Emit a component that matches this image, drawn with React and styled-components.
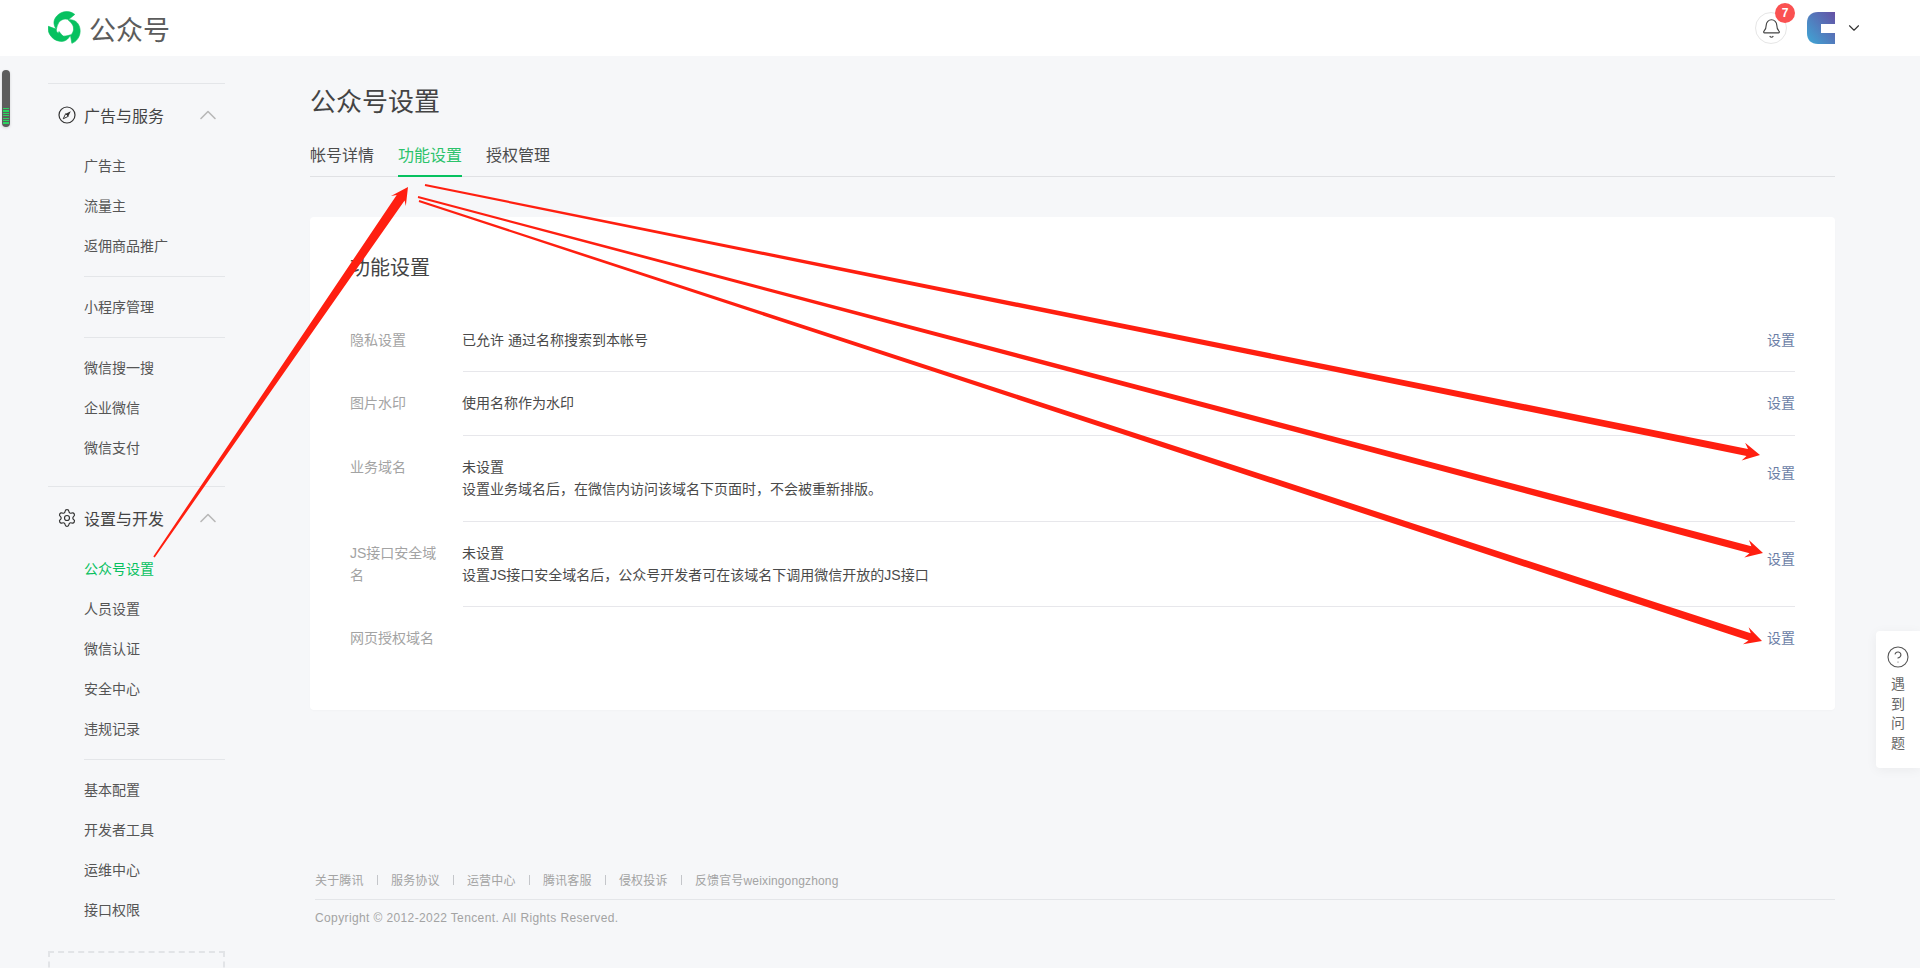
import React from "react";
import styled, { createGlobalStyle } from "styled-components";
import { Bell, ChevronDown, ChevronUp, CircleHelp, Settings } from "lucide-react";

const GlobalStyle = createGlobalStyle`
  html, body {
    margin: 0;
    padding: 0;
    background: #f6f7f9;
    font-family: "Liberation Sans", "Noto Sans CJK SC", sans-serif;
    color: #444;
  }
  * { box-sizing: border-box; }
`;

const Page = styled.div`
  position: relative;
  height: 968px;
  overflow: hidden;
  display: flex;
  flex-direction: column;
`;

const Header = styled.header`
  height: 56px;
  flex: none;
  background: #fff;
  display: flex;
  align-items: center;
  padding: 0 57px 0 48px;
`;

const Brand = styled.div`
  display: flex;
  align-items: center;
  gap: 7px;
  font-size: 27px;
  color: #5c5c5c;
`;

const HeaderRight = styled.div`
  margin-left: auto;
  display: flex;
  align-items: center;
`;

const BellButton = styled.div`
  position: relative;
  width: 32px;
  height: 32px;
  border: 1px solid #e6e6e6;
  border-radius: 50%;
  display: flex;
  align-items: center;
  justify-content: center;
  color: #444;
  margin-right: 20px;
`;

const Badge = styled.span`
  position: absolute;
  top: -10px;
  right: -9px;
  width: 20px;
  height: 20px;
  border-radius: 50%;
  background: #fa5151;
  color: #fff;
  font-size: 12px;
  font-weight: 700;
  line-height: 20px;
  text-align: center;
`;

const AvatarCaret = styled.span`
  display: flex;
  margin-left: 10px;
  color: #333;
`;

const Body = styled.div`
  flex: 1;
  display: flex;
  min-height: 0;
`;

const Sidebar = styled.aside`
  position: relative;
  width: 310px;
  flex: none;
  padding: 27px 85px 0 48px;
`;

const ScrollThumb = styled.div`
  position: absolute;
  left: 2px;
  top: 14px;
  width: 8px;
  height: 57px;
  border-radius: 4px;
  box-shadow: 0 1px 3px rgba(0, 0, 0, 0.15);
  background:
    repeating-linear-gradient(#2bd45f 0 1.2px, #5d5d5d 1.2px 2.4px) 1px 38px / 6px 17px no-repeat,
    #5d5d5d;
`;

const NavSection = styled.section`
  border-top: 1px solid #e4e6e9;
  margin-bottom: 18px;
  &:last-of-type {
    margin-bottom: 0;
  }
`;

const NavHead = styled.div`
  height: 62px;
  padding: 0 0 1px 10px;
  display: flex;
  align-items: center;
  gap: 8px;
  font-size: 16px;
  color: #444;
`;

const HeadCaret = styled.span`
  display: flex;
  margin-left: auto;
  margin-right: 3px;
  color: #b8b8b8;
`;

const GearSlot = styled.span`
  display: flex;
  margin: 0 -1px 0 -1px;
  color: #333;
`;

const NavGroup = styled.div`
  margin-left: 36px;
  padding: 10px 0;
  border-top: 1px solid #e4e6e9;
  ${NavHead} + & {
    border-top: 0;
    padding-top: 0;
  }
  &:last-child {
    padding-bottom: 0;
  }
`;

const NavItem = styled.div`
  height: 40px;
  line-height: 40px;
  font-size: 14px;
  color: ${({ $active }) => ($active ? "#07c160" : "#555")};
`;

const DashedBox = styled.div`
  margin-top: 21px;
  height: 90px;
  border: 2px dashed #e2e4e7;
`;

const Main = styled.main`
  flex: 1;
  min-width: 0;
  padding: 28px 85px 0 0;
`;

const Title = styled.h1`
  margin: 0;
  height: 36px;
  line-height: 36px;
  font-size: 26px;
  font-weight: 400;
  color: #444;
`;

const TabBar = styled.div`
  margin-top: 15px;
  height: 42px;
  display: flex;
  gap: 24px;
  border-bottom: 1px solid #e0e1e4;
`;

const Tab = styled.div`
  height: 42px;
  line-height: 42px;
  font-size: 16px;
  color: ${({ $active }) => ($active ? "#2cc36b" : "#4c4c4c")};
  border-bottom: 2px solid ${({ $active }) => ($active ? "#07c160" : "transparent")};
`;

const Card = styled.div`
  margin-top: 40px;
  background: #fff;
  border-radius: 4px;
  padding: 37px 40px 40px;
  box-shadow: 0 1px 2px rgba(0, 0, 0, 0.02);
`;

const CardTitle = styled.h2`
  margin: 0 0 27px;
  height: 28px;
  line-height: 28px;
  font-size: 20px;
  font-weight: 400;
  color: #444;
`;

const Row = styled.div`
  display: flex;
  font-size: 14px;
  line-height: 1.6;
`;

const RowLabel = styled.div`
  width: 113px;
  flex: none;
  padding: 20px 23px 20px 0;
  color: #a3a3a3;
`;

const RowBody = styled.div`
  flex: 1;
  display: flex;
  justify-content: space-between;
  align-items: flex-start;
  padding: 20px 0;
  border-bottom: ${({ $last }) => ($last ? "0" : "1px solid #e7e7eb")};
`;

const RowValue = styled.div`
  min-height: 22px;
  margin-left: -1px;
  color: #4a4a4a;
`;

const RowLink = styled.a`
  color: #6b7ea6;
  margin-top: ${({ $multi }) => ($multi ? "6px" : "0")};
`;

const Footer = styled.footer`
  margin: 160px 0 0 5px;
  font-size: 12px;
  color: #a3a3a3;
`;

const FooterLinks = styled.div`
  display: flex;
  align-items: center;
  height: 20px;
  margin-bottom: 9px;
  letter-spacing: 0.15px;
`;

const FooterSep = styled.span`
  width: 1px;
  height: 10px;
  margin: 0 13.2px;
  background: #c4c6ca;
`;

const Copyright = styled.div`
  border-top: 1px solid #e4e6e9;
  padding-top: 9px;
  line-height: 18px;
  letter-spacing: 0.38px;
`;

const HelpTab = styled.div`
  position: absolute;
  right: 0;
  top: 631px;
  width: 44px;
  height: 137px;
  background: #fff;
  border-radius: 4px 0 0 4px;
  box-shadow: 0 2px 12px rgba(0, 0, 0, 0.05);
  padding-top: 14px;
  display: flex;
  flex-direction: column;
  align-items: center;
  color: #555;
`;

const HelpText = styled.div`
  width: 14px;
  margin-top: 6px;
  font-size: 14px;
  line-height: 19.5px;
  text-align: center;
  color: #666;
`;

const Annotations = styled.svg`
  position: absolute;
  left: 0;
  top: 0;
  pointer-events: none;
`;

// hand drawn arrow: narrow at the tail, widening to a notched head
const arrowPoints = ([x1, y1], [x2, y2], neck = 3.4) => {
  const len = Math.hypot(x2 - x1, y2 - y1);
  const ux = (x2 - x1) / len;
  const uy = (y2 - y1) / len;
  const at = (along, side) =>
    `${(x2 - ux * along - uy * side).toFixed(1)},${(y2 - uy * along + ux * side).toFixed(1)}`;
  return [
    at(len, 0.9),
    at(13, neck),
    at(17, 9),
    `${x2},${y2}`,
    at(17, -9),
    at(13, -neck),
    at(len, -0.9),
  ].join(" ");
};

const ARROWS = [
  { from: [154, 557], to: [408, 187], neck: 4.8 },
  { from: [425, 185], to: [1760, 455], neck: 3.6 },
  { from: [418, 197], to: [1763, 553], neck: 3.6 },
  { from: [419, 201], to: [1762, 641], neck: 3.8 },
];

const Logo = () => (
  <svg width="34" height="34" viewBox="0 0 34 34">
    <g fill="#07c160" stroke="#07c160" strokeWidth="0.6">
      {[0, 120, 240].map((deg) => (
        <path
          key={deg}
          transform={`rotate(${deg} 17 17)`}
          d="M8.3 18.5C5.5 14 5 10 8 6c3-4 7.5-5.6 11.5-5.4 2.5.1 5.2 1.1 7.3 2.8l-6.2 5.2c-3.6-1.4-7.6-.1-9.8 2.9-1.3 2-2 4.5-2.5 7z"
        />
      ))}
      <path d="M11 20.5l-2.6 6.8 7-1.6z" />
    </g>
  </svg>
);

const Avatar = () => (
  <svg width="28" height="32" viewBox="0 0 28 32">
    <defs>
      <linearGradient id="avatarFill" x1="1" y1="0" x2="0" y2="1">
        <stop offset="0" stopColor="#6650a4" />
        <stop offset="1" stopColor="#3ea8d6" />
      </linearGradient>
    </defs>
    <path d="M11 0h17v32H11C4 32 0 28 0 21V11C0 4 4 0 11 0z" fill="url(#avatarFill)" />
    <rect x="14" y="12" width="14" height="9" fill="#fff" />
  </svg>
);

const CompassIcon = () => (
  <svg width="18" height="18" viewBox="0 0 18 18">
    <circle cx="9" cy="9" r="8" fill="none" stroke="#333" strokeWidth="1.2" />
    <path d="M12.8 5.2L10.3 10.3 7.7 7.7z" fill="#333" />
    <path d="M5.2 12.8L7.7 7.7l2.6 2.6z" fill="none" stroke="#333" strokeWidth="1" />
  </svg>
);

const FOOTER_LINKS = ["关于腾讯", "服务协议", "运营中心", "腾讯客服", "侵权投诉", "反馈官号weixingongzhong"];

const SettingRow = ({ label, link = true, multi, last, children }) => (
  <Row>
    <RowLabel>{label}</RowLabel>
    <RowBody $last={last}>
      <RowValue>{children}</RowValue>
      {link && <RowLink $multi={multi}>设置</RowLink>}
    </RowBody>
  </Row>
);

const App = () => {
  return (
    <Page>
      <GlobalStyle />
      <Header>
        <Brand>
          <Logo />
          公众号
        </Brand>
        <HeaderRight>
          <BellButton>
            <Bell size={21} strokeWidth={1.3} />
            <Badge>7</Badge>
          </BellButton>
          <Avatar />
          <AvatarCaret>
            <ChevronDown size={18} strokeWidth={1.5} />
          </AvatarCaret>
        </HeaderRight>
      </Header>

      <Body>
        <Sidebar>
          <ScrollThumb />
          <NavSection>
            <NavHead>
              <CompassIcon />
              广告与服务
              <HeadCaret>
                <ChevronUp size={28} strokeWidth={1.4} />
              </HeadCaret>
            </NavHead>
            <NavGroup>
              <NavItem>广告主</NavItem>
              <NavItem>流量主</NavItem>
              <NavItem>返佣商品推广</NavItem>
            </NavGroup>
            <NavGroup>
              <NavItem>小程序管理</NavItem>
            </NavGroup>
            <NavGroup>
              <NavItem>微信搜一搜</NavItem>
              <NavItem>企业微信</NavItem>
              <NavItem>微信支付</NavItem>
            </NavGroup>
          </NavSection>
          <NavSection>
            <NavHead>
              <GearSlot>
                <Settings size={20} strokeWidth={1.4} />
              </GearSlot>
              设置与开发
              <HeadCaret>
                <ChevronUp size={28} strokeWidth={1.4} />
              </HeadCaret>
            </NavHead>
            <NavGroup>
              <NavItem $active>公众号设置</NavItem>
              <NavItem>人员设置</NavItem>
              <NavItem>微信认证</NavItem>
              <NavItem>安全中心</NavItem>
              <NavItem>违规记录</NavItem>
            </NavGroup>
            <NavGroup>
              <NavItem>基本配置</NavItem>
              <NavItem>开发者工具</NavItem>
              <NavItem>运维中心</NavItem>
              <NavItem>接口权限</NavItem>
            </NavGroup>
          </NavSection>
          <DashedBox />
        </Sidebar>

        <Main>
          <Title>公众号设置</Title>
          <TabBar>
            <Tab>帐号详情</Tab>
            <Tab $active>功能设置</Tab>
            <Tab>授权管理</Tab>
          </TabBar>
          <Card>
            <CardTitle>功能设置</CardTitle>
            <SettingRow label="隐私设置">已允许 通过名称搜索到本帐号</SettingRow>
            <SettingRow label="图片水印">使用名称作为水印</SettingRow>
            <SettingRow label="业务域名" multi>
              未设置
              <br />
              设置业务域名后，在微信内访问该域名下页面时，不会被重新排版。
            </SettingRow>
            <SettingRow label="JS接口安全域名" multi>
              未设置
              <br />
              设置JS接口安全域名后，公众号开发者可在该域名下调用微信开放的JS接口
            </SettingRow>
            <SettingRow label="网页授权域名" last />
          </Card>
          <Footer>
            <FooterLinks>
              {FOOTER_LINKS.map((text, i) => (
                <React.Fragment key={text}>
                  {i > 0 && <FooterSep />}
                  <span>{text}</span>
                </React.Fragment>
              ))}
            </FooterLinks>
            <Copyright>Copyright © 2012-2022 Tencent. All Rights Reserved.</Copyright>
          </Footer>
        </Main>
      </Body>

      <HelpTab>
        <CircleHelp size={24} strokeWidth={1.1} />
        <HelpText>遇到问题</HelpText>
      </HelpTab>

      <Annotations width="1920" height="968" viewBox="0 0 1920 968">
        {ARROWS.map((a) => (
          <polygon key={a.to.join()} points={arrowPoints(a.from, a.to, a.neck)} fill="#ff1f10" />
        ))}
      </Annotations>
    </Page>
  );
};

export default App;
